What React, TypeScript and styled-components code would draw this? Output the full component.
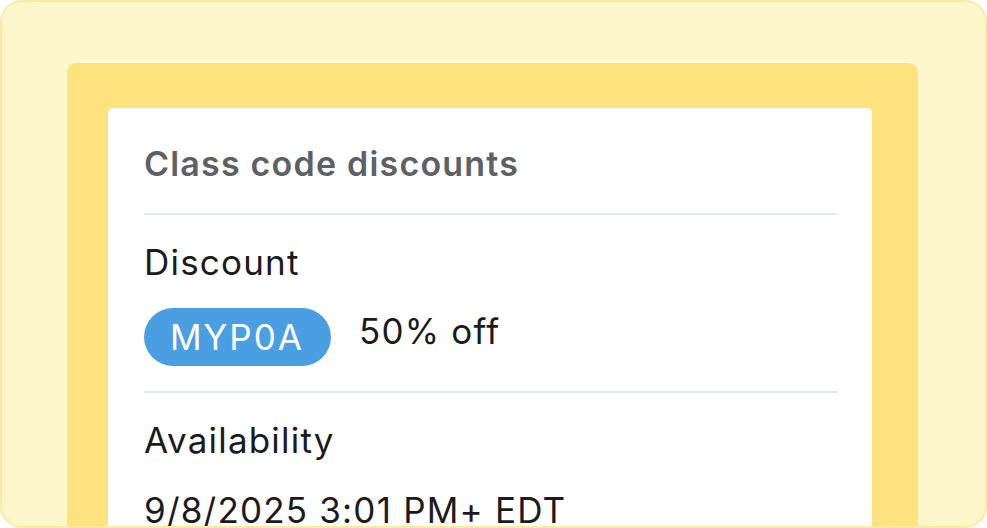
import styled, { createGlobalStyle } from "styled-components";

const GlobalStyle = createGlobalStyle`
  html, body {
    margin: 0;
    padding: 0;
    background: #ffffff;
  }
  body {
    font-family: "Inter", "Noto Sans", sans-serif;
  }
`;

const Frame = styled.div`
  box-sizing: border-box;
  width: 987px;
  height: 528px;
  padding: 61px 67px 0 65px;
  background: #fff7cc;
  border: 2px solid #fdeaa0;
  border-radius: 22px;
  overflow: hidden;
`;

const Tray = styled.div`
  height: 100%;
  padding: 45px 46px 0 41px;
  background: #fee37e;
  border-radius: 9px 9px 0 0;
`;

const Card = styled.div`
  height: 100%;
  padding: 36px 34px 0 36px;
  background: #ffffff;
  border-radius: 5px 5px 0 0;
`;

const Title = styled.h2`
  margin: 0 0 29px;
  font-size: 34px;
  line-height: 40px;
  font-weight: 600;
  color: #5e6163;
  letter-spacing: 1.2px;
`;

const Divider = styled.hr`
  margin: 0;
  border: 0;
  height: 2px;
  background: #e2e8e7;
`;

const Section = styled.section<{ $gap: number }>`
  display: flex;
  flex-direction: column;
  align-items: flex-start;
  gap: ${(p) => p.$gap}px;
  padding: 27px 0 25px;
`;

const Label = styled.div<{ $raise?: number }>`
  font-size: 35px;
  line-height: 40px;
  color: #1b1b1b;
  letter-spacing: 1.2px;
  padding-bottom: ${(p) => (p.$raise ?? 0) * 2}px;
`;

const Row = styled.div`
  display: flex;
  align-items: center;
  gap: 28px;
`;

const Code = styled.span`
  display: inline-flex;
  align-items: center;
  height: 58px;
  padding: 0 27px 0 26px;
  border-radius: 29px;
  background: #4a9fe3;
  color: #ffffff;
  font-size: 35px;
  letter-spacing: 2px;
`;

export default function App() {
  return (
    <>
      <GlobalStyle />
      <Frame>
        <Tray>
          <Card>
            <Title>Class code discounts</Title>
            <Divider />
            <Section $gap={26}>
              <Label>Discount</Label>
              <Row>
                <Code>MYP0A</Code>
                <Label $raise={6}>50% off</Label>
              </Row>
            </Section>
            <Divider />
            <Section $gap={30}>
              <Label>Availability</Label>
              <Label>9/8/2025 3:01 PM+ EDT</Label>
            </Section>
          </Card>
        </Tray>
      </Frame>
    </>
  );
}
